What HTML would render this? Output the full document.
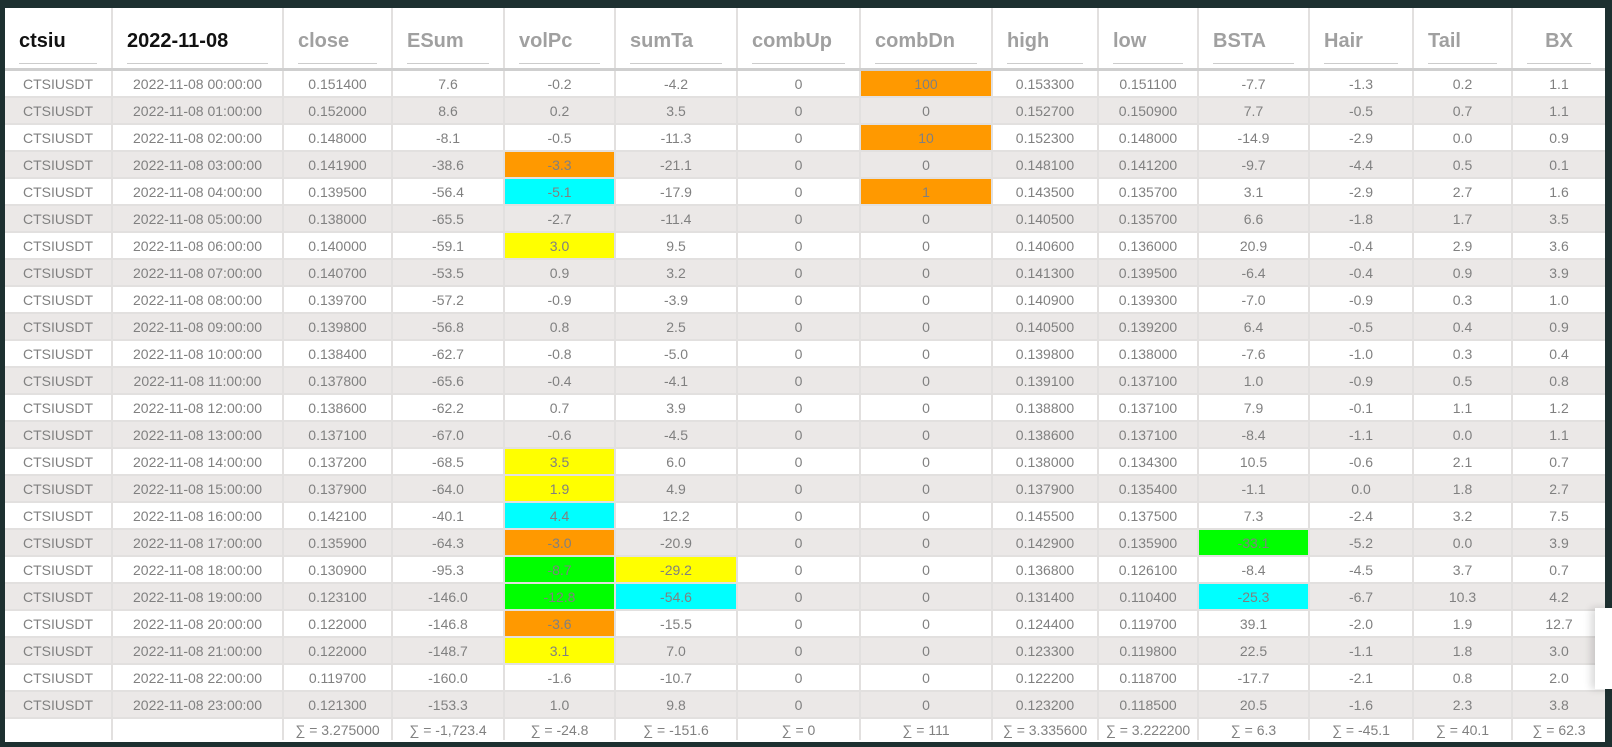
<!DOCTYPE html>
<html><head><meta charset="utf-8"><style>
html,body{margin:0;padding:0;background:#1d3030;width:1612px;height:747px;overflow:hidden;font-family:"Liberation Sans",sans-serif}
.wrap{position:absolute;left:5px;top:8px;width:1600px;height:734px;background:#fff;overflow:hidden}
table{border-collapse:collapse;table-layout:fixed;width:1600px}
td,th{border:2px solid #e2e0df;text-align:center;padding:0;color:#808080;font-size:14px;white-space:nowrap;overflow:hidden}
th{height:60px;border-top:none;border-bottom:3px solid #cfcfcf;font-size:20px;font-weight:bold;color:#a0a0a0;position:relative;vertical-align:top}
th span{display:block;text-align:left;padding:22px 0 0 14px;height:30px}
th i{position:absolute;left:14px;right:14px;top:55px;border-top:1px solid #ccc}
th.k{color:#111}
tbody tr td{height:25px}
tbody tr:nth-child(even) td{background:#ebe8e7}
tr.s td{background:#fff !important;height:21px;border-bottom:none}
td:first-child,th:first-child{border-left:none}
td:last-child,th:last-child{border-right:none}
.o{background:#ff9900 !important}.c{background:#00ffff !important}.y{background:#ffff00 !important}.g{background:#00ff00 !important}
.pop{position:absolute;left:1595px;top:608px;width:20px;height:81px;background:#fff;box-shadow:-4px 0 8px rgba(0,0,0,.15)}
</style></head><body>
<div class="wrap"><table>
<colgroup><col style="width:107px"><col style="width:171px"><col style="width:109px"><col style="width:112px"><col style="width:111px"><col style="width:122px"><col style="width:123px"><col style="width:132px"><col style="width:106px"><col style="width:100px"><col style="width:111px"><col style="width:104px"><col style="width:99px"><col style="width:93px"></colgroup>
<thead><tr><th class="k"><span>ctsiu</span><i></i></th><th class="k"><span>2022-11-08</span><i></i></th><th><span>close</span><i></i></th><th><span>ESum</span><i></i></th><th><span>volPc</span><i></i></th><th><span>sumTa</span><i></i></th><th><span>combUp</span><i></i></th><th><span>combDn</span><i></i></th><th><span>high</span><i></i></th><th><span>low</span><i></i></th><th><span>BSTA</span><i></i></th><th><span>Hair</span><i></i></th><th><span>Tail</span><i></i></th><th style="text-align:center"><span style="text-align:center;padding-left:0">BX</span><i></i></th></tr></thead>
<tbody>
<tr><td>CTSIUSDT</td><td>2022-11-08 00:00:00</td><td>0.151400</td><td>7.6</td><td>-0.2</td><td>-4.2</td><td>0</td><td class="o">100</td><td>0.153300</td><td>0.151100</td><td>-7.7</td><td>-1.3</td><td>0.2</td><td>1.1</td></tr>
<tr><td>CTSIUSDT</td><td>2022-11-08 01:00:00</td><td>0.152000</td><td>8.6</td><td>0.2</td><td>3.5</td><td>0</td><td>0</td><td>0.152700</td><td>0.150900</td><td>7.7</td><td>-0.5</td><td>0.7</td><td>1.1</td></tr>
<tr><td>CTSIUSDT</td><td>2022-11-08 02:00:00</td><td>0.148000</td><td>-8.1</td><td>-0.5</td><td>-11.3</td><td>0</td><td class="o">10</td><td>0.152300</td><td>0.148000</td><td>-14.9</td><td>-2.9</td><td>0.0</td><td>0.9</td></tr>
<tr><td>CTSIUSDT</td><td>2022-11-08 03:00:00</td><td>0.141900</td><td>-38.6</td><td class="o">-3.3</td><td>-21.1</td><td>0</td><td>0</td><td>0.148100</td><td>0.141200</td><td>-9.7</td><td>-4.4</td><td>0.5</td><td>0.1</td></tr>
<tr><td>CTSIUSDT</td><td>2022-11-08 04:00:00</td><td>0.139500</td><td>-56.4</td><td class="c">-5.1</td><td>-17.9</td><td>0</td><td class="o">1</td><td>0.143500</td><td>0.135700</td><td>3.1</td><td>-2.9</td><td>2.7</td><td>1.6</td></tr>
<tr><td>CTSIUSDT</td><td>2022-11-08 05:00:00</td><td>0.138000</td><td>-65.5</td><td>-2.7</td><td>-11.4</td><td>0</td><td>0</td><td>0.140500</td><td>0.135700</td><td>6.6</td><td>-1.8</td><td>1.7</td><td>3.5</td></tr>
<tr><td>CTSIUSDT</td><td>2022-11-08 06:00:00</td><td>0.140000</td><td>-59.1</td><td class="y">3.0</td><td>9.5</td><td>0</td><td>0</td><td>0.140600</td><td>0.136000</td><td>20.9</td><td>-0.4</td><td>2.9</td><td>3.6</td></tr>
<tr><td>CTSIUSDT</td><td>2022-11-08 07:00:00</td><td>0.140700</td><td>-53.5</td><td>0.9</td><td>3.2</td><td>0</td><td>0</td><td>0.141300</td><td>0.139500</td><td>-6.4</td><td>-0.4</td><td>0.9</td><td>3.9</td></tr>
<tr><td>CTSIUSDT</td><td>2022-11-08 08:00:00</td><td>0.139700</td><td>-57.2</td><td>-0.9</td><td>-3.9</td><td>0</td><td>0</td><td>0.140900</td><td>0.139300</td><td>-7.0</td><td>-0.9</td><td>0.3</td><td>1.0</td></tr>
<tr><td>CTSIUSDT</td><td>2022-11-08 09:00:00</td><td>0.139800</td><td>-56.8</td><td>0.8</td><td>2.5</td><td>0</td><td>0</td><td>0.140500</td><td>0.139200</td><td>6.4</td><td>-0.5</td><td>0.4</td><td>0.9</td></tr>
<tr><td>CTSIUSDT</td><td>2022-11-08 10:00:00</td><td>0.138400</td><td>-62.7</td><td>-0.8</td><td>-5.0</td><td>0</td><td>0</td><td>0.139800</td><td>0.138000</td><td>-7.6</td><td>-1.0</td><td>0.3</td><td>0.4</td></tr>
<tr><td>CTSIUSDT</td><td>2022-11-08 11:00:00</td><td>0.137800</td><td>-65.6</td><td>-0.4</td><td>-4.1</td><td>0</td><td>0</td><td>0.139100</td><td>0.137100</td><td>1.0</td><td>-0.9</td><td>0.5</td><td>0.8</td></tr>
<tr><td>CTSIUSDT</td><td>2022-11-08 12:00:00</td><td>0.138600</td><td>-62.2</td><td>0.7</td><td>3.9</td><td>0</td><td>0</td><td>0.138800</td><td>0.137100</td><td>7.9</td><td>-0.1</td><td>1.1</td><td>1.2</td></tr>
<tr><td>CTSIUSDT</td><td>2022-11-08 13:00:00</td><td>0.137100</td><td>-67.0</td><td>-0.6</td><td>-4.5</td><td>0</td><td>0</td><td>0.138600</td><td>0.137100</td><td>-8.4</td><td>-1.1</td><td>0.0</td><td>1.1</td></tr>
<tr><td>CTSIUSDT</td><td>2022-11-08 14:00:00</td><td>0.137200</td><td>-68.5</td><td class="y">3.5</td><td>6.0</td><td>0</td><td>0</td><td>0.138000</td><td>0.134300</td><td>10.5</td><td>-0.6</td><td>2.1</td><td>0.7</td></tr>
<tr><td>CTSIUSDT</td><td>2022-11-08 15:00:00</td><td>0.137900</td><td>-64.0</td><td class="y">1.9</td><td>4.9</td><td>0</td><td>0</td><td>0.137900</td><td>0.135400</td><td>-1.1</td><td>0.0</td><td>1.8</td><td>2.7</td></tr>
<tr><td>CTSIUSDT</td><td>2022-11-08 16:00:00</td><td>0.142100</td><td>-40.1</td><td class="c">4.4</td><td>12.2</td><td>0</td><td>0</td><td>0.145500</td><td>0.137500</td><td>7.3</td><td>-2.4</td><td>3.2</td><td>7.5</td></tr>
<tr><td>CTSIUSDT</td><td>2022-11-08 17:00:00</td><td>0.135900</td><td>-64.3</td><td class="o">-3.0</td><td>-20.9</td><td>0</td><td>0</td><td>0.142900</td><td>0.135900</td><td class="g">-33.1</td><td>-5.2</td><td>0.0</td><td>3.9</td></tr>
<tr><td>CTSIUSDT</td><td>2022-11-08 18:00:00</td><td>0.130900</td><td>-95.3</td><td class="g">-8.7</td><td class="y">-29.2</td><td>0</td><td>0</td><td>0.136800</td><td>0.126100</td><td>-8.4</td><td>-4.5</td><td>3.7</td><td>0.7</td></tr>
<tr><td>CTSIUSDT</td><td>2022-11-08 19:00:00</td><td>0.123100</td><td>-146.0</td><td class="g">-12.8</td><td class="c">-54.6</td><td>0</td><td>0</td><td>0.131400</td><td>0.110400</td><td class="c">-25.3</td><td>-6.7</td><td>10.3</td><td>4.2</td></tr>
<tr><td>CTSIUSDT</td><td>2022-11-08 20:00:00</td><td>0.122000</td><td>-146.8</td><td class="o">-3.6</td><td>-15.5</td><td>0</td><td>0</td><td>0.124400</td><td>0.119700</td><td>39.1</td><td>-2.0</td><td>1.9</td><td>12.7</td></tr>
<tr><td>CTSIUSDT</td><td>2022-11-08 21:00:00</td><td>0.122000</td><td>-148.7</td><td class="y">3.1</td><td>7.0</td><td>0</td><td>0</td><td>0.123300</td><td>0.119800</td><td>22.5</td><td>-1.1</td><td>1.8</td><td>3.0</td></tr>
<tr><td>CTSIUSDT</td><td>2022-11-08 22:00:00</td><td>0.119700</td><td>-160.0</td><td>-1.6</td><td>-10.7</td><td>0</td><td>0</td><td>0.122200</td><td>0.118700</td><td>-17.7</td><td>-2.1</td><td>0.8</td><td>2.0</td></tr>
<tr><td>CTSIUSDT</td><td>2022-11-08 23:00:00</td><td>0.121300</td><td>-153.3</td><td>1.0</td><td>9.8</td><td>0</td><td>0</td><td>0.123200</td><td>0.118500</td><td>20.5</td><td>-1.6</td><td>2.3</td><td>3.8</td></tr>
<tr class="s"><td></td><td></td><td>∑ = 3.275000</td><td>∑ = -1,723.4</td><td>∑ = -24.8</td><td>∑ = -151.6</td><td>∑ = 0</td><td>∑ = 111</td><td>∑ = 3.335600</td><td>∑ = 3.222200</td><td>∑ = 6.3</td><td>∑ = -45.1</td><td>∑ = 40.1</td><td>∑ = 62.3</td></tr>
</tbody></table></div>
<div class="pop"></div>
</body></html>
